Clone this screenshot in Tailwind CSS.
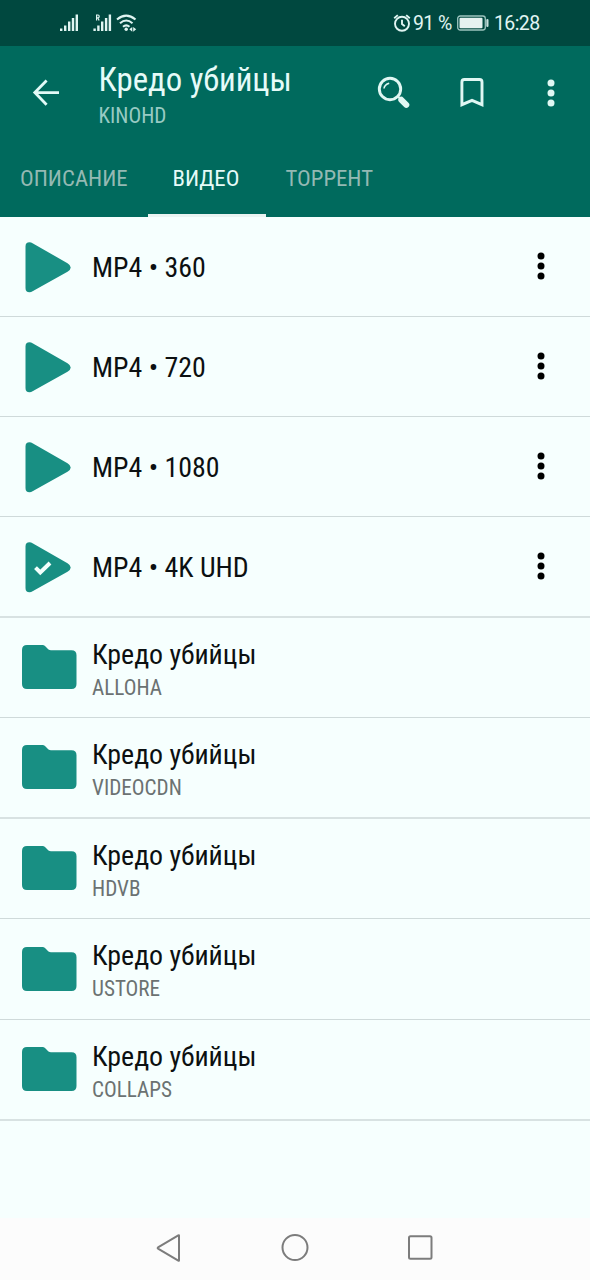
<!DOCTYPE html>
<html lang="ru">
<head>
<meta charset="utf-8">
<title>Кредо убийцы</title>
<script src="https://cdn.jsdelivr.net/npm/@tailwindcss/browser@4"></script>
</head>
<body class="w-[590px] h-[1280px] overflow-hidden flex flex-col bg-[#f6fffe] font-['Roboto_Condensed','Roboto',sans-serif] [font-stretch:75%] text-[#0c1011]">
<svg class="hidden">
  <symbol id="play" viewBox="0 0 56 56"><path d="M4.500 6.500 Q4.500 2.300 8.500 2.300 Q10 2.300 12 3.400 L46.500 23.300 Q49.700 25.200 49.700 27.500 Q49.700 29.800 46.500 31.700 L12 51.100 Q10 52.300 8.500 52.300 Q4.500 52.300 4.500 48Z" fill="#188f83"/></symbol>
  <symbol id="folder" viewBox="0 0 56 46"><path d="M6 1H21.500Q23 1 24 2L27.500 5.500Q28.500 6.300 30 6.300H50.500Q55.500 6.300 55.500 11.300V40Q55.500 45 50.500 45H6Q1 45 1 40V6Q1 1 6 1Z" fill="#188f83"/></symbol>
  <symbol id="dots" viewBox="0 0 10 28"><circle cx="5" cy="4" r="3.500"/><circle cx="5" cy="14" r="3.500"/><circle cx="5" cy="24" r="3.500"/></symbol>
</svg>

<div class="h-[46px] shrink-0 bg-[#00483f] flex items-center text-[#e0f5f2] font-['Roboto',sans-serif] [font-stretch:100%] text-[20px]">
  <svg class="w-[80px] h-[46px] ml-[58px]" viewBox="58 0 80 46" fill="#e0f5f2">
    <path d="M60 28.500h2.400v2.500h-2.400zM64 25.500h2.400V31H64zM68 21.500h2.400V31H68zM71.800 18h2.400v13h-2.400zM75.600 14.500H78V31h-2.400z"/>
    <path d="M93.400 28.500h2.400v2.500h-2.400zM97.200 25.500h2.400V31h-2.400zM101 21.500h2.400V31H101zM104.900 18h2.400v13h-2.400zM108.700 14.500h2.400V31h-2.400z"/>
    <path d="M96.600 20.500v-5.500h1.400q1.200 0 1.200 1.400t-1.200 1.400h-1.400m1.300 0l1.200 2.700" fill="none" stroke="#e0f5f2" stroke-width="1.200"/>
    <g fill="none" stroke="#e0f5f2" stroke-width="2.100"><path d="M117 19.500Q126.200 11.700 135.500 19.500M120 23.200Q126.200 17.800 132.500 23.200M123 26.700Q126.200 24 129.500 26.700"/></g>
    <circle cx="126.200" cy="29.300" r="1.700"/><path d="M129.300 29.300l3-2.400v4.800zM136.200 29.300l-3-2.400v4.800z"/>
  </svg>
  <svg class="w-[19px] h-[20px] ml-[255px]" viewBox="0 0 19 20" fill="none" stroke="#e0f5f2" stroke-width="1.900"><circle cx="9" cy="10.800" r="7"/><path d="M9 6.800v4.300l2.800 2.200M1.200 5.200L4.800 2.100M16.800 5.200L13.200 2.100"/></svg>
  <span class="ml-[1px] mt-[1px] w-[44px] whitespace-nowrap text-[19.5px] tracking-[-0.6px]">91 %</span>
  <svg class="w-[34px] h-[18px]" viewBox="0 0 34 18"><rect x=".7" y="2" width="27.600" height="14" rx="2.500" fill="none" stroke="#9cc4bf" stroke-width="1.300"/><rect x="2.500" y="3.800" width="23" height="10.400" rx="1" fill="#e6f2f0"/><rect x="29.300" y="5" width="2.200" height="8" rx="1" fill="#c5e0dc"/></svg>
  <span class="ml-[3px] mt-[1px] whitespace-nowrap text-[19.5px] tracking-[-0.6px]">16:28</span>
</div>

<header class="h-[171px] shrink-0 bg-[#006a5d] flex flex-col text-[#e6fbf8]">
  <div class="h-[95px] flex">
    <svg class="w-[28px] h-[28px] ml-[32px] mt-[32px]" viewBox="0 0 28 28" fill="none" stroke="#e2faf7" stroke-width="2.800"><path d="M27 14.600H3M14.600 2.500L2.800 14.600l11.800 12.100"/></svg>
    <div class="ml-[38.500px] mt-[16px] w-[278.500px] flex flex-col">
      <span class="text-[32.8px] leading-[37px] whitespace-nowrap">Кредо убийцы</span>
      <span class="text-[21.2px] leading-[26px] mt-[4px] text-[#98cac3]">KINOHD</span>
    </div>
    <svg class="w-[34px] h-[34px] mt-[30px]" viewBox="0 0 34 34" fill="none" stroke="#e0f7f3"><circle cx="13" cy="13" r="10.700" stroke-width="2.900"/><path d="M7 12.500Q7.600 8.400 12.200 7.200" stroke-width="1.600"/><path d="M21 20.500l3 3" stroke-width="2"/><path d="M24.300 23.800l5 5" stroke-width="6" stroke-linecap="round"/></svg>
    <svg class="w-[24px] h-[32px] ml-[49px] mt-[31px]" viewBox="0 0 24 32" fill="none" stroke="#e0f7f3" stroke-width="2.900"><path d="M1.900 27.700V5Q1.900 2.500 4.400 2.500H19.500Q22 2.500 22 5V27.700L12 23.300Z"/></svg>
    <svg class="w-[10px] h-[28px] ml-[61.500px] mt-[32.500px]" fill="#e0f7f3"><use href="#dots"/></svg>
  </div>
  <nav class="h-[76px] flex text-[22.8px] leading-[76px] text-[#94b9b3] whitespace-nowrap">
    <span class="w-[148px] pl-[20px]">ОПИСАНИЕ</span>
    <span class="w-[118px] pl-[24.500px] border-b-[3px] border-[#eaf4f2] text-[#e6fbf8]">ВИДЕО</span>
    <span class="pl-[19.500px]">ТОРРЕНТ</span>
  </nav>
</header>

<main class="h-[1001px] shrink-0 flex flex-col text-[27.9px] whitespace-nowrap">
  <div class="h-[100px] shrink-0 pt-[3px] flex items-center border-b border-[#cfdada]"><svg class="w-[56px] h-[56px] ml-[21px] -mt-[1px]"><use href="#play"/></svg><span class="ml-[15px] w-[444px]">MP4 • 360</span><svg class="w-[10px] h-[28px] -mt-[4px]"><use href="#dots"/></svg></div>
  <div class="h-[100px] shrink-0 pt-[3px] flex items-center border-b border-[#cfdada]"><svg class="w-[56px] h-[56px] ml-[21px] -mt-[1px]"><use href="#play"/></svg><span class="ml-[15px] w-[444px]">MP4 • 720</span><svg class="w-[10px] h-[28px] -mt-[4px]"><use href="#dots"/></svg></div>
  <div class="h-[100px] shrink-0 pt-[3px] flex items-center border-b border-[#cfdada]"><svg class="w-[56px] h-[56px] ml-[21px] -mt-[1px]"><use href="#play"/></svg><span class="ml-[15px] w-[444px]">MP4 • 1080</span><svg class="w-[10px] h-[28px] -mt-[4px]"><use href="#dots"/></svg></div>
  <div class="h-[101px] shrink-0 pt-[3px] flex items-center border-b-2 border-[#d8e2e2]"><svg class="w-[56px] h-[56px] ml-[21px] -mt-[1px]"><use href="#play"/><path d="M14.500 27.600l4.800 4.900L29 23" fill="none" stroke="#f2fffd" stroke-width="4"/></svg><span class="ml-[15px] w-[444px]">MP4 • 4K UHD</span><svg class="w-[10px] h-[28px] -mt-[4px]"><use href="#dots"/></svg></div>
  <div class="h-[100px] shrink-0 flex items-center border-b border-[#cfdada]"><svg class="w-[56px] h-[46px] ml-[21px] -mt-[1px]"><use href="#folder"/></svg><div class="ml-[15px] mt-[5px] flex flex-col"><span class="leading-[34px]">Кредо убийцы</span><span class="text-[21.2px] leading-[31px] text-[#6b7272]">ALLOHA</span></div></div>
  <div class="h-[101px] shrink-0 flex items-center border-b-2 border-[#d8e2e2]"><svg class="w-[56px] h-[46px] ml-[21px] -mt-[1px]"><use href="#folder"/></svg><div class="ml-[15px] mt-[6px] flex flex-col"><span class="leading-[34px]">Кредо убийцы</span><span class="text-[21.2px] leading-[31px] text-[#6b7272]">VIDEOCDN</span></div></div>
  <div class="h-[100px] shrink-0 flex items-center border-b border-[#cfdada]"><svg class="w-[56px] h-[46px] ml-[21px] -mt-[1px]"><use href="#folder"/></svg><div class="ml-[15px] mt-[6px] flex flex-col"><span class="leading-[34px]">Кредо убийцы</span><span class="text-[21.2px] leading-[31px] text-[#6b7272]">HDVB</span></div></div>
  <div class="h-[101px] shrink-0 flex items-center border-b border-[#cfdada]"><svg class="w-[56px] h-[46px] ml-[21px] -mt-[1px]"><use href="#folder"/></svg><div class="ml-[15px] mt-[5px] flex flex-col"><span class="leading-[34px]">Кредо убийцы</span><span class="text-[21.2px] leading-[31px] text-[#6b7272]">USTORE</span></div></div>
  <div class="h-[101px] shrink-0 flex items-center border-b-2 border-[#d8e2e2]"><svg class="w-[56px] h-[46px] ml-[21px] -mt-[1px]"><use href="#folder"/></svg><div class="ml-[15px] mt-[6px] flex flex-col"><span class="leading-[34px]">Кредо убийцы</span><span class="text-[21.2px] leading-[31px] text-[#6b7272]">COLLAPS</span></div></div>
</main>

<footer class="h-[62px] shrink-0 bg-[#fcfcfc] flex items-center">
  <svg class="w-[28px] h-[30px] ml-[155px] -mt-[2px]" viewBox="0 0 28 30" fill="none" stroke="#7c7c7c" stroke-width="2" stroke-linejoin="round"><path d="M24 2.600V27.400Q24 28 23.300 27.700L3 15.600Q2.300 15 3 14.400L23.300 2.300Q24 2 24 2.600Z"/></svg>
  <svg class="w-[30px] h-[30px] ml-[97px] -mt-[2px]" viewBox="0 0 30 30" fill="none" stroke="#7c7c7c" stroke-width="2"><circle cx="15" cy="14.500" r="12.500"/></svg>
  <svg class="w-[28px] h-[28px] ml-[97px] -mt-[2px]" viewBox="0 0 28 28" fill="none" stroke="#7c7c7c" stroke-width="2"><rect x="2" y="2.200" width="22.500" height="22.500" rx="1.500"/></svg>
</footer>
</body>
</html>
